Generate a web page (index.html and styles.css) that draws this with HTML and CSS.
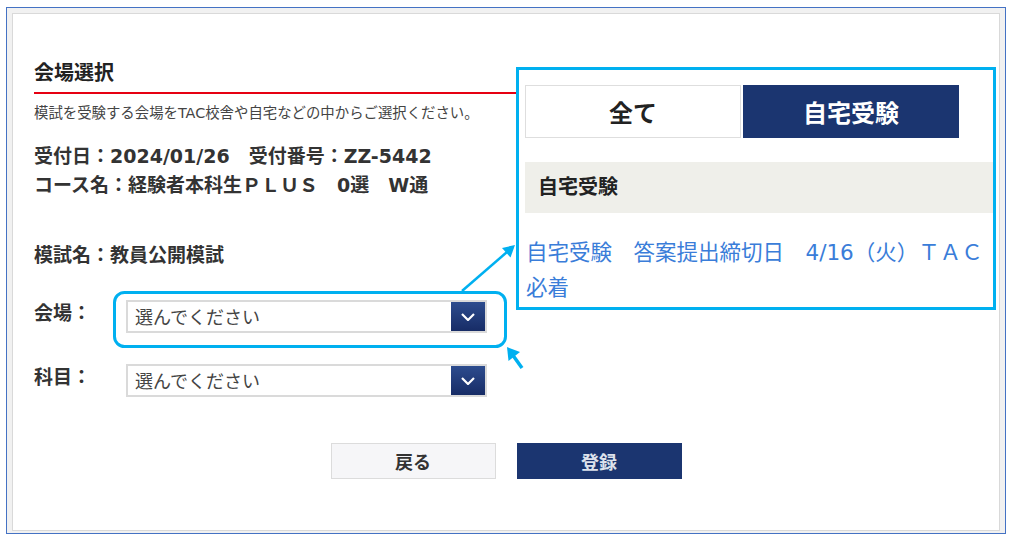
FILE: index.html
```html
<!DOCTYPE html>
<html lang="ja">
<head>
  <meta charset="UTF-8">
  <meta name="viewport" content="width=device-width, initial-scale=1.0">
  <title>会場選択</title>
  <link rel="stylesheet" href="styles.css">
</head>
<body>
  <div class="frame">
    <div class="sheet">
      <h2 class="section-title">会場選択</h2>
      <p class="lead">模試を受験する会場をTAC校舎や自宅などの中からご選択ください。</p>

      <div class="info">
        <p>受付日：2024/01/26　受付番号：ZZ-5442</p>
        <p>コース名：経験者本科生ＰＬＵＳ　0選　W通</p>
      </div>

      <p class="exam">模試名：教員公開模試</p>

      <div class="form">
        <div class="form-row">
          <span class="form-label">会場：</span>
          <div class="select">
            <span class="select-text">選んでください</span>
            <span class="select-btn">
              <svg width="14" height="8" viewBox="0 0 14 8"><polyline points="1,1 7,7 13,1" fill="none" stroke="#fff" stroke-width="2.2"/></svg>
            </span>
          </div>
        </div>
        <div class="form-row">
          <span class="form-label">科目：</span>
          <div class="select">
            <span class="select-text">選んでください</span>
            <span class="select-btn">
              <svg width="14" height="8" viewBox="0 0 14 8"><polyline points="1,1 7,7 13,1" fill="none" stroke="#fff" stroke-width="2.2"/></svg>
            </span>
          </div>
        </div>
      </div>

      <div class="actions">
        <button class="btn btn-back">戻る</button>
        <button class="btn btn-submit">登録</button>
      </div>

      <!-- zoomed view of the opened select -->
      <div class="callout">
        <div class="tabs">
          <div class="tab">全て</div>
          <div class="tab tab-active">自宅受験</div>
        </div>
        <div class="group-head">自宅受験</div>
        <p class="option">自宅受験　答案提出締切日　4/16（火）ＴＡＣ必着</p>
      </div>

      <!-- annotation marks -->
      <svg class="marks" viewBox="0 0 1012 538">
        <rect x="114.5" y="292.5" width="391" height="54" rx="10" fill="none" stroke="#00b0f0" stroke-width="3"/>
        <line x1="462" y1="291" x2="507" y2="252" stroke="#00b0f0" stroke-width="2.5"/>
        <polygon points="515,245 510.5,257.5 502,248" fill="#00b0f0"/>
        <line x1="512" y1="354" x2="522" y2="368" stroke="#00b0f0" stroke-width="3.5"/>
        <polygon points="507,347 520,352 508.5,361" fill="#00b0f0"/>
      </svg>
    </div>
  </div>
</body>
</html>
```

FILE: styles.css
```css
body {
  margin: 0;
  font-family: "DejaVu Sans", "Noto Sans CJK JP", sans-serif;
  color: #333;
  background: #fff;
}
p {
  margin: 0;
}
.frame {
  margin: 7px 0 0 6px;
  width: 1000px;
  height: 527px;
  box-sizing: border-box;
  border: 1px solid #4472c4;
  padding: 5px 5px 2px 5px;
  background: #f1f1f1;
}
.sheet {
  position: relative;
  height: 100%;
  box-sizing: border-box;
  border: 1px solid #d9d9d9;
  background: #fff;
  padding: 45px 21px 0 21px;
}
.section-title {
  margin: 0;
  font-size: 20px;
  line-height: 28px;
  font-weight: bold;
  color: #222;
  padding-bottom: 5px;
  border-bottom: 2px solid #e60012;
}
.lead {
  margin-top: 9px;
  font-size: 14.4px;
  line-height: 20px;
  color: #444;
}
.info {
  margin-top: 19px;
  font-size: 19px;
  line-height: 29px;
  font-weight: bold;
  color: #333;
}
.exam {
  margin-top: 41px;
  font-size: 19px;
  line-height: 29px;
  font-weight: bold;
}
.form {
  margin-top: 30px;
}
.form-row {
  display: flex;
  align-items: flex-start;
}
.form-row + .form-row {
  margin-top: 31px;
}
.form-label {
  width: 92px;
  font-size: 19px;
  line-height: 27px;
  font-weight: bold;
}
.select {
  width: 361px;
  height: 33px;
  box-sizing: border-box;
  border: 2px solid #dadada;
  display: flex;
  align-items: center;
  justify-content: space-between;
  background: #fff;
}
.select-text {
  padding: 0 0 2px 7px;
  font-size: 18px;
  color: #444;
}
.select-btn {
  width: 34px;
  height: 100%;
  display: flex;
  align-items: center;
  justify-content: center;
  background: linear-gradient(#2d4c8e, #172c66);
}
.actions {
  margin-top: 46px;
  display: flex;
  justify-content: center;
  gap: 21px;
}
.btn {
  width: 165px;
  height: 36px;
  font-family: inherit;
  font-size: 18px;
  font-weight: bold;
  border: 1px solid #dcdcdc;
  cursor: pointer;
}
.btn-back {
  background: #f6f6f8;
  color: #333;
}
.btn-submit {
  background: #1b3570;
  border-color: #1b3570;
  color: #dde2ec;
}

/* zoomed dropdown panel */
.callout {
  position: absolute;
  left: 503px;
  top: 53px;
  width: 480px;
  box-sizing: border-box;
  border: 3px solid #00b0f0;
  background: #fff;
  padding: 15px 0 2px 6px;
}
.tabs {
  display: flex;
  gap: 2px;
}
.tab {
  width: 216px;
  height: 53px;
  box-sizing: border-box;
  border: 1px solid #dedede;
  display: flex;
  align-items: center;
  justify-content: center;
  font-size: 24px;
  font-weight: bold;
  color: #222;
}
.tab-active {
  background: #1b3570;
  border-color: #1b3570;
  color: #fff;
}
.group-head {
  margin-top: 24px;
  height: 51px;
  line-height: 51px;
  padding-left: 13px;
  background: #efefea;
  font-size: 20px;
  font-weight: bold;
  color: #222;
}
.option {
  margin-top: 22px;
  padding: 0 4px 0 1px;
  font-size: 21.5px;
  line-height: 35px;
  color: #3a7dd9;
}
.marks {
  position: absolute;
  left: -13px;
  top: -14px;
  width: 1012px;
  height: 538px;
  pointer-events: none;
}
```
